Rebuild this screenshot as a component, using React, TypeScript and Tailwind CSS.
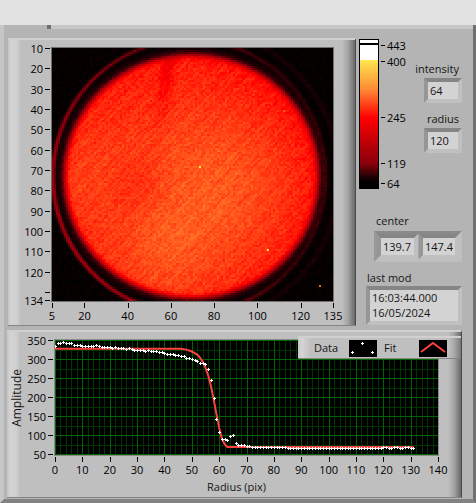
import type { ReactNode } from 'react';

type Rgb = [number, number, number];

const COLS = 140;
const ROWS = 126;
const LEVEL_STEP = 6;

const COLOR_STOPS: [number, Rgb][] = [
  [64, [0, 0, 0]],
  [84, [30, 0, 4]],
  [119, [136, 0, 12]],
  [190, [200, 0, 6]],
  [245, [255, 0, 0]],
  [310, [255, 98, 32]],
  [400, [255, 231, 79]],
];

function levelColor(v: number) {
  for (let i = 1; i < COLOR_STOPS.length; i++) {
    const [v1, c1] = COLOR_STOPS[i];
    if (v <= v1) {
      const [v0, c0] = COLOR_STOPS[i - 1];
      const t = Math.max(0, (v - v0) / (v1 - v0));
      return `rgb(${c0.map((c, k) => Math.round(c + (c1[k] - c) * t)).join(',')})`;
    }
  }
  return 'rgb(255,231,79)';
}

// Cheap deterministic noise, so the frame is the same on every render
function noise(x: number, y: number) {
  const s = Math.sin(x * 12.9898 + y * 78.233) * 43758.5453;
  return (s - Math.floor(s)) * 2 - 1;
}

const bump = (d: number, w: number) => Math.exp(-(d * d) / (w * w));

const HOT_PIXELS: Record<string, number> = {
  '73,59': 400,
  '107,100': 390,
  '133,118': 305,
  '115,31': 300,
};

function sample(cx: number, cy: number) {
  const hot = HOT_PIXELS[`${cx},${cy}`];
  if (hot) return hot;

  const x = cx * 2 + 1;
  const y = cy * 2 + 1;
  const dx = x - 139;
  const dy = y - 128;
  const dist = Math.hypot(dx, dy) || 1;
  const cos = dx / dist;
  const sin = dy / dist;
  const r = dist + 5.5 * sin * sin;
  const n = noise(cx, cy);
  const left = (1 - cos) / 2;
  const low = (1 + sin) / 2;

  // Diffraction rings around the pupil
  const ring =
    67 +
    n * 3 +
    (18 + 58 * left * (0.5 + 0.6 * low)) * bump(dist - (136 - 2 * cos), 2.4) +
    14 * (1 - left) * bump(dist - 147, 2.6) +
    14 * bump(r - 131, 3.5);

  const stripes = 5 * Math.sin((x + y) * 0.9) + 4 * Math.sin((x + y) * 0.31);
  const rim = Math.pow(Math.min(1, dist / 125), 3);
  const body =
    270 +
    34 * bump(Math.hypot((dx - 22) / 1.1, dy - 12), 80) +
    20 * bump(Math.hypot(dx + 25, dy - 75), 45) +
    12 * bump(Math.hypot(dx + 100, dy), 50) -
    18 * bump(Math.hypot(dx + 55, dy - 10), 26) -
    32 * bump(x - 117 + (y - 10) * 0.14, 7) * bump(y - 16, 52) -
    24 * Math.max(0, cos) * rim -
    12 * Math.max(0, -sin) * rim +
    stripes +
    n * 13;

  const edge = 1 / (1 + Math.exp((r - 126) / 1.5));
  return ring + (body - ring) * edge;
}

// One path per palette level, with equal neighbours merged into runs
function buildFrame() {
  const paths = new Map<number, string>();
  for (let y = 0; y < ROWS; y++) {
    let start = 0;
    let level = Math.round(sample(0, y) / LEVEL_STEP);
    for (let x = 1; x <= COLS; x++) {
      const next = x < COLS ? Math.round(sample(x, y) / LEVEL_STEP) : -1;
      if (next !== level) {
        const len = x - start;
        paths.set(level, `${paths.get(level) ?? ''}M${start} ${y}h${len}v1h-${len}z`);
        start = x;
        level = next;
      }
    }
  }
  return [...paths.entries()];
}

const FRAME = buildFrame();

const HEAD = [
  335, 343, 343, 346, 343, 343, 343, 338, 338, 338, 335, 335, 335, 335, 335, 337, 335, 332, 332, 332,
  332, 330, 332, 330, 330, 330, 327, 330, 327, 325, 325, 325, 324, 322, 325, 322, 322, 322, 319, 319,
  317, 314, 314, 314, 312, 312, 309, 309, 304, 304, 302, 299, 296, 291, 291, 288, 275, 246, 198, 143,
  109, 90, 90, 87, 98, 101, 80, 75, 74, 74, 72, 72,
];
const DATA = [...HEAD, ...Array.from({ length: 60 }, (_, i) => (i < 13 ? 69 : i > 47 && i % 4 < 2 ? 69 : 67))];

const FIT = [
  [0, 328], [46, 328], [48, 326], [50, 321], [52, 313], [53, 305], [54, 294], [55, 278], [56, 258],
  [57, 230], [58, 195], [59, 157], [60, 120], [61, 92], [62, 77], [63, 70], [131, 70],
];

const px = (r: number) => (r / 140) * 383;
const py = (a: number) => ((350 - a) / 300) * 114 + 0.5;

interface Tick {
  at: number;
  label?: string;
}

const ticks = (from: number, to: number, values: number[]): Tick[] =>
  values.map((v) => ({ at: ((v - from) / (to - from)) * 100, label: String(v) }));

const IMAGE_Y: Tick[] = [
  ...ticks(10, 134, [10, 20, 30, 40, 50, 60, 70, 80, 90, 100, 110, 120, 134]),
  { at: (120 / 124) * 100 },
];
const IMAGE_X = ticks(5, 135, [5, 20, 40, 60, 80, 100, 120, 135]);
const GRAPH_Y = ticks(350, 50, [350, 300, 250, 200, 150, 100, 50]);
const GRAPH_X = ticks(0, 140, [0, 10, 20, 30, 40, 50, 60, 70, 80, 90, 100, 110, 120, 130, 140]);

const RAMP_TICKS = [
  { y: 6, label: '443' },
  { y: 22, label: '400' },
  { y: 78, label: '245' },
  { y: 124, label: '119' },
  { y: 144, label: '64' },
];

function YAxis({ items, className }: { items: Tick[]; className: string }) {
  return (
    <svg className={`overflow-visible shrink-0 ${className}`}>
      {items.map((t) => (
        <svg key={t.at} x="100%" y={`${t.at}%`} className="overflow-visible">
          <rect x="-7" y="0" width="5" height="1" shapeRendering="crispEdges" />
          {t.label && (
            <text x="-9" y="5" textAnchor="end">{t.label}</text>
          )}
        </svg>
      ))}
    </svg>
  );
}

function XAxis({ items }: { items: Tick[] }) {
  return (
    <svg className="block w-full h-[24px] overflow-visible">
      {items.map((t) => (
        <svg key={t.at} x={`${t.at}%`} className="overflow-visible">
          <rect x="0" y="2" width="1" height="5" shapeRendering="crispEdges" />
          <text x="0" y="19" textAnchor="middle">{t.label}</text>
        </svg>
      ))}
    </svg>
  );
}

function Panel({ children, className }: { children: ReactNode; className: string }) {
  return (
    <section
      className={`border-t-2 border-t-[#d0d0d0] border-b border-b-[#858585] border-r border-r-[#4a4a4a] bg-[linear-gradient(90deg,#c4c4c4_0,#d4d4d4_3px,#d0d0d0_9px,#bfbfbf_13px,#bfbfbf_calc(100%-13px),#a4a4a4_calc(100%-7px),#686868_100%)] ${className}`}
    >
      {children}
    </section>
  );
}

const SUNKEN = 'border-4 border-t-[#858585] border-l-[#969696] border-r-[#c0c0c0] border-b-[#c0c0c0] bg-[#d3d3d3]';

function Indicator({ id, label, value }: { id: string; label: string; value: string }) {
  return (
    <div className="flex flex-col items-end">
      <label htmlFor={id} className="h-[16px] px-[3px]">{label}</label>
      <input id={id} readOnly value={value} className={`mt-px w-[38px] h-[25px] px-[2px] outline-none ${SUNKEN}`} />
    </div>
  );
}

function ColorRamp() {
  return (
    <svg className="w-[48px] h-[151px] overflow-visible" role="img" aria-label="Color scale">
      <defs>
        <linearGradient id="ramp" x1="0" y1="0" x2="0" y2="1">
          <stop offset="0" stopColor="#ffe74f" />
          <stop offset="0.23" stopColor="#ff8a34" />
          <stop offset="0.45" stopColor="#ff0000" />
          <stop offset="0.81" stopColor="#88000c" />
          <stop offset="0.92" stopColor="#180003" />
          <stop offset="0.96" stopColor="#000000" />
        </linearGradient>
      </defs>
      <rect width="20" height="150" />
      <rect x="1" y="1" width="18" height="20" fill="#fff" />
      <rect x="1" y="4" width="18" height="2" />
      <rect x="1" y="21" width="18" height="128" fill="url(#ramp)" />
      {RAMP_TICKS.map((t) => (
        <g key={t.label}>
          <rect x="22" y={t.y} width="4" height="1" />
          <text x="28" y={t.y + 5}>{t.label}</text>
        </g>
      ))}
    </svg>
  );
}

function IntensityImage() {
  return (
    <svg
      viewBox={`0 0 ${COLS} ${ROWS}`}
      preserveAspectRatio="none"
      shapeRendering="crispEdges"
      className="block w-full h-[253px] bg-black outline outline-[#6f6f6f]"
      role="img"
      aria-label="Intensity image"
    >
      {FRAME.map(([level, d]) => (
        <path key={level} d={d} fill={levelColor(level * LEVEL_STEP)} />
      ))}
    </svg>
  );
}

function ProfileGraph() {
  const minorX = Array.from({ length: 71 }, (_, i) => i * 2);
  const minorY = Array.from({ length: 13 }, (_, i) => 50 + i * 25);
  return (
    <svg
      viewBox="0 0 383 115"
      preserveAspectRatio="none"
      className="block w-full h-[115px] bg-black outline outline-[#8a8a8a]"
      role="img"
      aria-label="Radial profile"
    >
      <g fill="#003600" shapeRendering="crispEdges">
        {minorX.map((r) => <rect key={r} x={Math.round(px(r))} y="0" width="1" height="115" />)}
        {minorY.map((a) => <rect key={a} x="0" y={Math.floor(py(a))} width="383" height="1" />)}
      </g>
      <g fill="#006400" shapeRendering="crispEdges">
        {minorX.filter((r) => r % 10 === 0).map((r) => (
          <rect key={r} x={Math.round(px(r))} y="0" width="1" height="115" />
        ))}
        {minorY.filter((a) => a % 50 === 0).map((a) => (
          <rect key={a} x="0" y={Math.floor(py(a))} width="383" height="1" />
        ))}
      </g>
      <polyline
        points={FIT.map(([r, a]) => `${px(r)},${py(a)}`).join(' ')}
        fill="none"
        stroke="#ff4040"
        strokeWidth="2"
      />
      <g fill="#fff" shapeRendering="crispEdges">
        {DATA.map((a, r) => {
          const x = Math.round(px(r));
          const y = Math.round(py(a));
          return <path key={r} d={`M${x - 1} ${y}h3v1h-3zM${x} ${y - 1}h1v3h-1z`} />;
        })}
      </g>
    </svg>
  );
}

function Legend() {
  return (
    <div className="absolute right-0 top-[4px] flex items-center w-[163px] h-[23px] pl-[16px] border-t-2 border-t-[#d0d0d0] border-b border-b-[#858585] bg-[linear-gradient(90deg,#c8c8c8_0,#d4d4d4_4px,#bfbfbf_13px,#bfbfbf_calc(100%-12px),#a4a4a4_calc(100%-6px),#787878_100%)]">
      <span className="w-[35px]">Data</span>
      <svg className="w-[28px] h-[17px] bg-black" shapeRendering="crispEdges" fill="#fff">
        <path d="M12 3h3v1h-3zM13 2h1v3h-1zM2 12h3v1h-3zM3 11h1v3h-1zM22 12h3v1h-3zM23 11h1v3h-1z" />
      </svg>
      <span className="w-[35px] ml-[7px]">Fit</span>
      <svg className="w-[28px] h-[17px] bg-black">
        <path d="M2 12L14 3L26 12" fill="none" stroke="#ff4040" strokeWidth="2" />
      </svg>
    </div>
  );
}

export default function App() {
  return (
    <div className="min-h-screen flex flex-col bg-[#b4b4b4] font-['Open_Sans','Noto_Sans',sans-serif] text-[11px] leading-[16px] text-[#161616]">
      <div className="h-[25px] bg-[#e2e2e2]" />
      <main className="flex-1 flex flex-col border-l-4 border-l-[#c6c6c6] border-r-[3px] border-r-[#6f6f6f] border-b-4 border-b-[#828282]">
        <div className="h-[4px] ml-[43px] border-l-4 border-l-[#707070] bg-[#c6c6c6]" />

        <div className="flex gap-[3px] mt-[9px] ml-[4px] mr-[11px]">
          <Panel className="flex-1 min-w-0 pt-[8px] pr-[22px]">
            <div className="flex">
              <YAxis items={IMAGE_Y} className="w-[44px] h-[252px]" />
              <div className="flex-1 min-w-0">
                <IntensityImage />
                <XAxis items={IMAGE_X} />
              </div>
            </div>
          </Panel>

          <aside className="w-[103px] shrink-0 flex flex-col pt-px">
            <div className="flex justify-between">
              <ColorRamp />
              <div className="flex flex-col gap-[8px] pt-[22px]">
                <Indicator id="intensity" label="intensity" value="64" />
                <Indicator id="radius" label="radius" value="120" />
              </div>
            </div>

            <fieldset className="mt-[23px] ml-[15px]">
              <legend className="ml-[2px]">center</legend>
              <div className="mt-[2px] flex gap-px border-[3px] border-t-[#8a8a8a] border-l-[#989898] border-r-[#bfbfbf] border-b-[#bfbfbf] bg-[#a6a6a6]">
                <input aria-label="center x" readOnly value="139.7" className={`w-[41px] h-[25px] px-[2px] outline-none ${SUNKEN}`} />
                <input aria-label="center y" readOnly value="147.4" className={`w-[40px] h-[25px] px-[2px] outline-none ${SUNKEN}`} />
              </div>
            </fieldset>

            <div className="mt-[8px] ml-[7px]">
              <label htmlFor="last-mod" className="block ml-px">last mod</label>
              <textarea
                id="last-mod"
                readOnly
                rows={2}
                value={'16:03:44.000\n16/05/2024'}
                className={`block w-full h-[39px] px-[2px] leading-[15px] resize-none overflow-hidden outline-none ${SUNKEN}`}
              />
            </div>
          </aside>
        </div>

        <Panel className="relative mt-[4px] ml-[3px] mr-[11px] pt-[8px] pr-[23px]">
          <div className="flex">
            <div className="w-[20px] h-[115px] flex items-center justify-center text-xs">
              <span className="[writing-mode:vertical-rl] rotate-180">Amplitude</span>
            </div>
            <YAxis items={GRAPH_Y} className="w-[28px] h-[114px]" />
            <div className="flex-1 min-w-0">
              <ProfileGraph />
              <XAxis items={GRAPH_X} />
              <p className="text-center h-[18px] pr-5">Radius (pix)</p>
            </div>
          </div>
          <Legend />
        </Panel>
      </main>
    </div>
  );
}
